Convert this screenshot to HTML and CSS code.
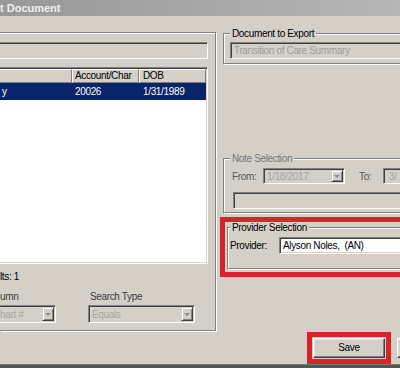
FILE: index.html
```html
<!DOCTYPE html>
<html>
<head>
<meta charset="utf-8">
<link rel="stylesheet" href="styles.css">
</head>
<body>
<div class="window">
  <div class="titlebar">t Document</div>
  <div class="client">
    <div class="left">
      <div class="group group-left">
        <div class="field search"></div>
        <div class="list">
          <div class="list-head">
            <div class="hcell c1"></div>
            <div class="hcell c2">Account/Char</div>
            <div class="hcell c3">DOB</div>
          </div>
          <div class="list-row selected">
            <div class="cell c1">y</div>
            <div class="cell c2">20026</div>
            <div class="cell c3">1/31/1989</div>
          </div>
        </div>
        <div class="results">lts: 1</div>
        <div class="search-row">
          <div class="search-col col-a">
            <div class="lbl">umn</div>
            <div class="combo combo-a"><span class="combo-text">hart #</span><span class="drop"><span class="arrow"></span></span></div>
          </div>
          <div class="search-col col-b">
            <div class="lbl lbl-b">Search Type</div>
            <div class="combo combo-b"><span class="combo-text">Equals</span><span class="drop"><span class="arrow"></span></span></div>
          </div>
        </div>
      </div>
    </div>
    <div class="right">
      <div class="group doc-group">
        <div class="legend">Document to Export</div>
        <div class="field doc-field">Transition of Care Summary</div>
      </div>
      <div class="group note-group">
        <div class="legend legend-disabled">Note Selection</div>
        <div class="note-row">
          <span class="note-lbl from-lbl">From:</span>
          <div class="combo combo-date"><span class="combo-text">1/18/2017</span><span class="drop"><span class="arrow"></span></span></div>
          <span class="note-lbl to-lbl">To:</span>
          <div class="combo combo-date2"><span class="combo-text">3/</span></div>
        </div>
        <div class="field note-field"></div>
      </div>
      <div class="highlight provider-box">
        <div class="group provider-group">
          <div class="legend legend-tight">Provider Selection</div>
          <div class="provider-row">
            <span class="provider-lbl">Provider:</span>
            <div class="field provider-field">Alyson Noles,  (AN)</div>
          </div>
        </div>
      </div>
      <div class="button-row">
        <div class="highlight save-box">
          <div class="button save-btn">Save</div>
        </div>
        <div class="button next-btn"></div>
      </div>
    </div>
  </div>
  <div class="bottom-band"></div>
</div>
</body>
</html>
```

FILE: styles.css
```css
* { box-sizing: border-box; }

html, body {
  margin: 0;
  padding: 0;
}

body {
  width: 400px;
  height: 368px;
  overflow: hidden;
  background: #d4d0c8;
  font-family: "Liberation Sans", Arial, sans-serif;
  font-size: 10px;
  letter-spacing: -0.35px;
  color: #000;
}

.window {
  display: flex;
  flex-direction: column;
  width: 400px;
  height: 368px;
  overflow: hidden;
}

.titlebar {
  height: 16px;
  flex: none;
  background: linear-gradient(90deg, #989898 0%, #b6b6b6 100%);
  color: #f0f0f0;
  font-weight: bold;
  font-size: 11px;
  letter-spacing: 0;
  line-height: 16px;
  white-space: nowrap;
  padding-left: 0;
}

.client {
  height: 348px;
  flex: none;
  display: flex;
}

.bottom-band {
  flex: 1;
  background: #555555;
  border-top: 1px solid #7a7a7a;
}

/* group boxes (etched) */
.group {
  border: 1px solid #808080;
  box-shadow: inset 1px 1px 0 #fff, 1px 1px 0 #fff;
}

.legend {
  width: max-content;
  margin: -7px 0 0 6px;
  padding: 0 2px;
  line-height: 13px;
  background: #d4d0c8;
}

.legend-disabled { color: #767676; }

.legend-tight {
  margin: -6px 0 0 2px;
  line-height: 12px;
}

/* sunken fields */
.field {
  height: 17px;
  border: 1px solid;
  border-color: #808080 #fff #fff #808080;
  box-shadow: inset 1px 1px 0 #404040, inset -1px -1px 0 #d4d0c8;
  background: #d4d0c8;
  line-height: 15px;
  white-space: pre;
  overflow: hidden;
}

/* left column */
.left {
  width: 216px;
  margin-right: 7px;
  padding-top: 16px;
  flex: none;
}

.group-left {
  width: 216px;
  height: 299px;
  border-left: none;
  box-shadow: inset 0 1px 0 #fff, 1px 1px 0 #fff;
  padding: 9px 7px 0 0;
}

.search {
  width: 208px;
  border-left: none;
  box-shadow: inset 0 1px 0 #404040, inset -1px -1px 0 #d4d0c8;
}

.list {
  margin-top: 8px;
  width: 208px;
  height: 197px;
  background: #fff;
  border: 1px solid;
  border-left: none;
  border-color: #808080 #fff #fff #808080;
  box-shadow: inset 0 1px 0 #404040, inset -1px -1px 0 #d4d0c8;
  padding: 1px 1px 1px 0;
}

.list-head {
  display: flex;
  height: 14px;
}

.hcell {
  background: #d4d0c8;
  border: 1px solid;
  border-color: #fff #808080 #808080 #fff;
  line-height: 12px;
  white-space: nowrap;
  overflow: hidden;
}

.list-head .c1 { width: 72px; border-left: none; }
.list-head .c2 { width: 67px; padding-left: 2px; }
.list-head .c3 { flex: 1; padding-left: 3px; }

.list-row {
  display: flex;
  height: 17px;
  line-height: 17px;
  white-space: nowrap;
}

.selected {
  background: #0a246a;
  color: #fff;
}

.list-row .c1 { width: 72px; padding-left: 2px; }
.list-row .c2 { width: 67px; padding-left: 3px; }
.list-row .c3 { flex: 1; padding-left: 4px; }

.results {
  margin-top: 6px;
  line-height: 13px;
}

.search-row {
  display: flex;
  gap: 32px;
  margin-top: 7px;
}

.lbl {
  line-height: 13px;
  color: #3c3c3c;
}

.lbl-b { padding-left: 2px; }

.col-a { width: 56px; }
.col-b { width: 107px; }

.combo {
  display: flex;
  align-items: center;
  height: 18px;
  margin-top: 2px;
  border: 1px solid;
  border-color: #808080 #fff #fff #808080;
  box-shadow: inset 1px 1px 0 #404040, inset -1px -1px 0 #d4d0c8;
  background: #d4d0c8;
  padding: 1px 1px 1px 1px;
  white-space: nowrap;
  overflow: hidden;
}

.combo-a {
  border-left: none;
  box-shadow: inset 0 1px 0 #404040, inset -1px -1px 0 #d4d0c8;
  padding-left: 0;
}

.combo-text {
  color: #a4a4a4;
  padding-left: 2px;
  flex: 1;
  overflow: hidden;
}

.combo-a .combo-text { padding-left: 0; }

.drop {
  flex: none;
  width: 12px;
  height: 14px;
  display: flex;
  align-items: center;
  justify-content: center;
  border: 1px solid;
  border-color: #d4d0c8 #404040 #404040 #d4d0c8;
  box-shadow: inset 1px 1px 0 #fff, inset -1px -1px 0 #808080;
  background: #d4d0c8;
}

.arrow {
  width: 0;
  height: 0;
  border-left: 3px solid transparent;
  border-right: 3px solid transparent;
  border-top: 3px solid #8a8a8a;
  margin-top: 1px;
}

/* right column */
.right {
  width: 260px;
  flex: none;
  display: flex;
  flex-direction: column;
}

.doc-group {
  margin-top: 17px;
  padding-bottom: 4px;
  border-right: none;
}

.doc-field {
  margin: 2px 0 0 6px;
  padding-left: 3px;
  color: #9c9c9c;
}

.note-group {
  margin-top: 94px;
  padding-bottom: 3px;
  border-right: none;
}

.note-row {
  display: flex;
  align-items: center;
  height: 16px;
  margin-top: 3px;
  padding-left: 8px;
}

.note-lbl {
  color: #555;
  line-height: 13px;
}

.from-lbl { width: 31px; }
.to-lbl { width: 24px; margin-left: 14px; }

.combo-date {
  width: 82px;
  height: 16px;
  margin-top: 0;
}

.combo-date .combo-text { padding-left: 2px; }

.combo-date .drop {
  height: 12px;
  width: 12px;
}

.combo-date2 {
  width: 80px;
  height: 16px;
  margin-top: 0;
}

.combo-date2 .combo-text { padding-left: 4px; }

.note-field {
  margin: 8px 0 0 9px;
}

.highlight {
  border: 5px solid #d8232b;
}

.provider-box {
  margin: 4px 0 0 -3px;
  padding: 5px 0 3px 2px;
  border-right: none;
}

.provider-group {
  padding-bottom: 14px;
  border-right: none;
}

.provider-row {
  display: flex;
  align-items: center;
  margin-top: 3px;
}

.provider-lbl {
  width: 51px;
  padding-left: 2px;
  line-height: 13px;
}

.provider-field {
  flex: 1;
  background: #fff;
  padding-left: 3px;
}

.button-row {
  display: flex;
  margin-top: 55px;
  padding-left: 84px;
}

.save-box {
  padding: 1px;
}

.button {
  height: 20px;
  border: 1px solid;
  border-color: #fff #404040 #404040 #fff;
  box-shadow: inset -1px -1px 0 #808080, inset 1px 1px 0 #e8e6e0;
  background: #d4d0c8;
  text-align: center;
  line-height: 18px;
}

.save-btn { width: 72px; }

.next-btn {
  width: 80px;
  margin: 6px 0 0 6px;
}
```
